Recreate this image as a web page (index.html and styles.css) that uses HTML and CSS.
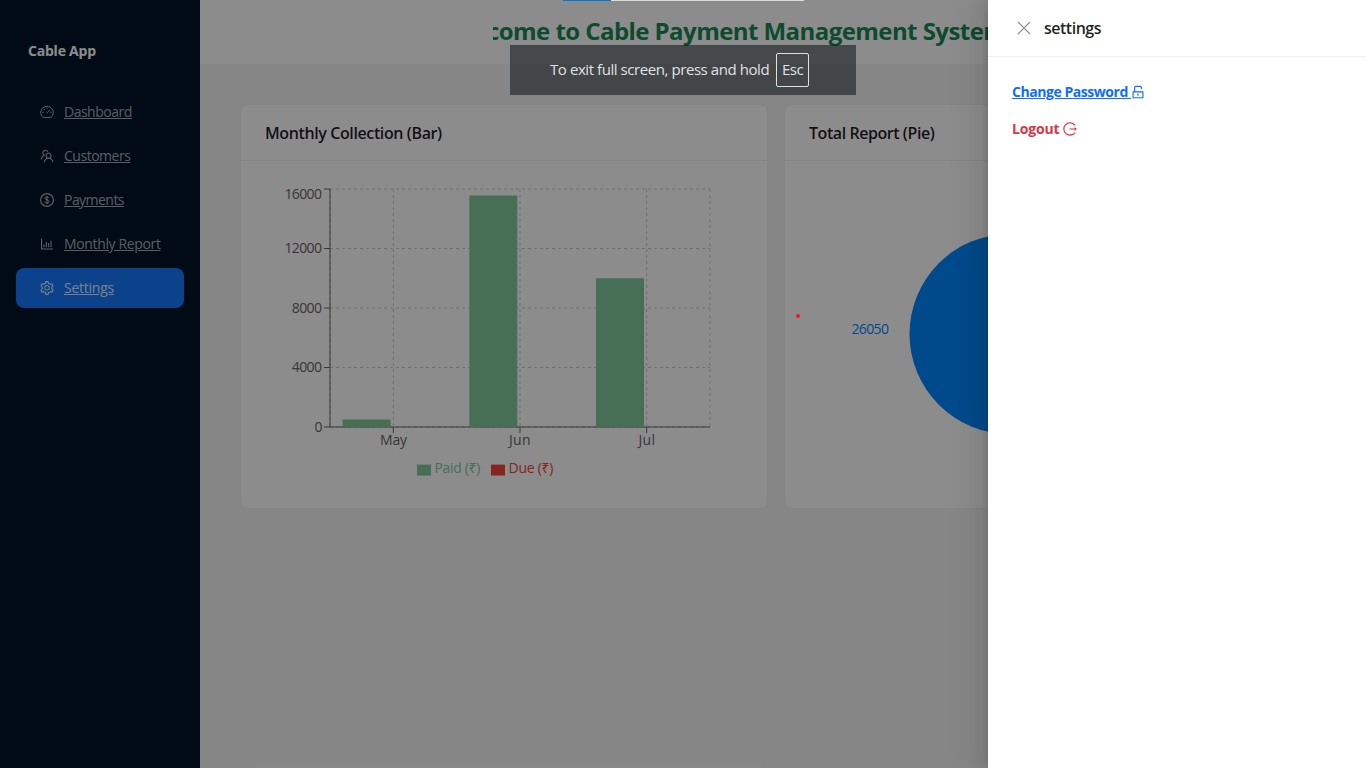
FILE: index.html
```html
<!DOCTYPE html>
<html lang="en">
<head>
<meta charset="utf-8">
<title>Cable App</title>
<link rel="stylesheet" href="styles.css">
</head>
<body>
<div class="layout">
  <aside class="sider">
    <div class="brand">Cable App</div>
    <nav class="menu">
      <a class="item"><svg class="icon" viewBox="0 0 14 14" fill="none" stroke="currentColor"><path d="M3 12.4A6.3 6.3 0 1 1 11 12.4Z"/><path d="M6.6 8.4 9.8 4.9M7 2.5v1.3M2.4 7.3h1.4M10.2 7.3h1.4M3.7 4l1 1"/></svg><span class="t-dash">Dashboard</span></a>
      <a class="item"><svg class="icon" viewBox="64 64 896 896" fill="currentColor"><path d="M824.2 699.9a301.55 301.55 0 00-86.4-60.4C783.1 602.8 812 546.8 812 484c0-110.8-92.4-201.7-203.2-200-109.1 1.7-197 90.6-197 200 0 62.8 29 118.8 74.2 155.5a300.95 300.95 0 00-86.4 60.4C345 754.6 314 826.8 312 903.8a8 8 0 008 8.2h56c4.3 0 7.9-3.4 8-7.7 1.9-58 25.4-112.3 66.7-153.5A226.62 226.62 0 01612 684c60.9 0 118.2 23.7 161.3 66.8C814.6 792 838 846.3 840 904.3c.1 4.3 3.7 7.7 8 7.7h56a8 8 0 008-8.2c-2-77-33-149.2-87.8-203.9zM612 612c-34.2 0-66.4-13.3-90.5-37.5a126.86 126.86 0 01-37.5-91.8c.3-32.8 13.4-64.5 36.3-88 24-24.6 56.1-38.3 90.4-38.7 33.9-.3 66.8 12.9 91 36.6 24.8 24.3 38.4 56.8 38.4 91.4 0 34.2-13.3 66.3-37.5 90.5A127.3 127.3 0 01612 612zM361.5 510.4c-.9-8.7-1.4-17.5-1.4-26.4 0-15.9 1.5-31.4 4.3-46.5.7-3.6-1.2-7.3-4.5-8.8-13.6-6.1-26.1-14.5-36.9-25.1a127.54 127.54 0 01-38.7-95.4c.9-32.1 13.8-62.6 36.3-85.6 24.7-25.3 57.9-39.1 93.2-38.7 31.9.3 62.7 12.6 86 34.4 7.9 7.4 14.7 15.6 20.4 24.4 2 3.1 5.9 4.4 9.3 3.2 17.6-6.1 36.2-10.4 55.3-12.4 5.6-.6 8.8-6.6 6.3-11.6-32.5-64.3-98.9-108.7-175.7-109.9-110.9-1.7-203.3 89.2-203.3 199.9 0 62.8 28.9 118.8 74.2 155.5-31.8 14.7-61.1 35-86.5 60.4-54.8 54.7-85.8 126.9-87.8 204a8 8 0 008 8.2h56.1c4.3 0 7.9-3.4 8-7.7 1.9-58 25.4-112.3 66.7-153.5 29.4-29.4 65.4-49.8 104.7-59.7 3.9-1 6.5-4.7 6-8.7z"/></svg><span class="t-cust">Customers</span></a>
      <a class="item"><svg class="icon" viewBox="0 0 14 14" fill="none" stroke="currentColor"><circle cx="7" cy="7" r="6.4" stroke-width="1.15"/><path d="M9 5.2C8.8 4.3 8 4 7 4 5.900 4 5.100 4.500 5.100 5.400 5.100 7.300 9 6.400 9 8.500 9 9.500 8.200 10 7 10 5.900 10 5 9.600 4.900 8.600M7 3v8"/></svg><span class="t-pay">Payments</span></a>
      <a class="item"><svg class="icon" viewBox="64 64 896 896" fill="currentColor"><path d="M888 792H200V168c0-4.400-3.600-8-8-8h-56c-4.400 0-8 3.600-8 8v688c0 4.400 3.600 8 8 8h752c4.400 0 8-3.600 8-8v-56c0-4.400-3.600-8-8-8zM288 712h56c4.400 0 8-3.600 8-8V560c0-4.400-3.600-8-8-8h-56c-4.400 0-8 3.600-8 8v144c0 4.400 3.600 8 8 8zm152 0h56c4.400 0 8-3.600 8-8V384c0-4.400-3.600-8-8-8h-56c-4.400 0-8 3.600-8 8v320c0 4.400 3.600 8 8 8zm152 0h56c4.400 0 8-3.600 8-8V462c0-4.400-3.600-8-8-8h-56c-4.400 0-8 3.600-8 8v242c0 4.400 3.600 8 8 8zm152 0h56c4.400 0 8-3.600 8-8V304c0-4.400-3.600-8-8-8h-56c-4.400 0-8 3.600-8 8v400c0 4.400 3.600 8 8 8z"/></svg><span class="t-rep">Monthly Report</span></a>
      <a class="item selected"><svg class="icon" viewBox="64 64 896 896" fill="currentColor"><path d="M924.8 625.7l-65.5-56c3.1-19 4.7-38.4 4.7-57.8s-1.6-38.8-4.7-57.8l65.5-56a32.03 32.03 0 009.3-35.2l-.9-2.6a443.74 443.74 0 00-79.7-137.9l-1.8-2.1a32.12 32.12 0 00-35.1-9.5l-81.3 28.9c-30-24.6-63.5-44-99.7-57.6l-15.7-85a32.05 32.05 0 00-25.8-25.7l-2.7-.5c-52.1-9.4-106.9-9.4-159 0l-2.7.5a32.05 32.05 0 00-25.8 25.7l-15.8 85.4a351.86 351.86 0 00-99 57.4l-81.9-29.1a32 32 0 00-35.1 9.5l-1.8 2.1a446.02 446.02 0 00-79.7 137.9l-.9 2.6c-4.5 12.5-.8 26.5 9.3 35.2l66.3 56.6c-3.1 18.8-4.6 38-4.6 57.1 0 19.2 1.5 38.4 4.600 57.1L99 625.5a32.03 32.03 0 00-9.3 35.2l.9 2.6c18.1 50.4 44.900 96.9 79.7 137.9l1.8 2.1a32.12 32.12 0 0035.1 9.500l81.9-29.1c29.8 24.5 63.1 43.900 99 57.4l15.8 85.4a32.05 32.05 0 0025.8 25.7l2.7.5a449.4 449.4 0 00159 0l2.700-.5a32.05 32.05 0 0025.8-25.7l15.7-85a350 350 0 0099.700-57.6l81.3 28.9a32 32 0 0035.1-9.5l1.8-2.1c34.8-41.1 61.6-87.5 79.7-137.9l.9-2.6c4.5-12.3.8-26.3-9.3-35zM788.3 465.9c2.5 15.1 3.8 30.6 3.8 46.1s-1.3 31-3.8 46.1l-6.6 40.1 74.7 63.9a370.03 370.03 0 01-42.6 73.6L721 702.8l-31.4 25.8c-23.9 19.6-50.5 35-79.3 45.8l-38.1 14.3-17.9 97a377.5 377.5 0 01-85 0l-17.9-97.2-37.8-14.5c-28.5-10.8-55-26.2-78.7-45.7l-31.4-25.9-93.4 33.2c-17-22.9-31.2-47.6-42.6-73.6l75.500-64.5-6.5-40c-2.4-14.9-3.7-30.3-3.7-45.5 0-15.3 1.2-30.6 3.7-45.5l6.5-40-75.5-64.5c11.3-26.1 25.6-50.7 42.6-73.6l93.4 33.2 31.4-25.9c23.7-19.5 50.2-34.9 78.7-45.7l37.9-14.3 17.9-97.2c28.1-3.2 56.8-3.2 85 0l17.9 97 38.1 14.3c28.7 10.8 55.4 26.2 79.3 45.8l31.4 25.8 92.8-32.9c17 22.9 31.2 47.6 42.6 73.6L781.8 426l6.5 39.9zM512 326c-97.2 0-176 78.8-176 176s78.8 176 176 176 176-78.8 176-176-78.8-176-176-176zm79.2 255.2A111.6 111.6 0 01512 614c-29.9 0-58-11.7-79.2-32.8A111.6 111.6 0 01400 502c0-29.900 11.7-58 32.8-79.2C454 401.6 482.1 390 512 390c29.9 0 58 11.6 79.2 32.8A111.6 111.6 0 01624 502c0 29.9-11.7 58-32.8 79.2z"/></svg><span class="t-set">Settings</span></a>
    </nav>
  </aside>
  <div class="page">
    <header class="header"><div class="marquee"><h1>Welcome to Cable Payment Management System</h1></div></header>
    <main class="content">
      <section class="card">
        <h2><span class="t-bar">Monthly Collection (Bar)</span></h2>
        <div class="body">
          <svg class="chart" viewBox="265 185 478 300">
            <g stroke="#ccc" fill="none" stroke-dasharray="3 3">
              <path d="M330 189H710M330 248.500H710M330 308H710M330 367.500H710M330 427H710M330 189V427M393.330 189V427M520 189V427M646.670 189V427M710 189V427"/>
            </g>
            <g stroke="#666" fill="none"><path d="M330 189V427H710M324 189h6M324 248.500h6M324 308h6M324 367.500h6M324 427h6M393.330 427v6M520 427v6M646.670 427v6"/></g>
            <g fill="#82ca9d"><path d="M342.670 419.500h48V427h-48zM469.330 195.500h48V427h-48zM596 278.200h48V427h-48z"/></g>
            <g fill="#666" class="ticks">
              <text x="284.500" y="199" textLength="37.500">16000</text><text x="284.500" y="253" textLength="37.500">12000</text><text x="291.700" y="313" textLength="30.300">8000</text><text x="291.700" y="372" textLength="30.300">4000</text><text x="314.500" y="432" textLength="7.500">0</text>
              <text x="380" y="445" textLength="27">May</text><text x="509" y="445" textLength="21.500">Jun</text><text x="638.500" y="445" textLength="16.500">Jul</text>
            </g>
            <g class="ticks"><path fill="#82ca9d" d="M417 464.600h14v10.900h-14z"/><text fill="#82ca9d" x="434.500" y="473" textLength="46">Paid (₹)</text><path fill="#f44336" d="M491 464.600h14v10.900h-14z"/><text fill="#f44336" x="508.500" y="473" textLength="45">Due (₹)</text></g>
          </svg>
        </div>
      </section>
      <section class="card">
        <h2><span class="t-pie">Total Report (Pie)</span></h2>
        <div class="body">
          <svg class="chart" viewBox="809 185 478 300"><circle cx="1009.500" cy="334" r="100" fill="#0088fe"/><text class="ticks" fill="#0088fe" x="851.500" y="334" textLength="37.500">26050</text></svg>
        </div>
      </section>
    </main>
  </div>
</div>
<div class="mask"></div>
<span class="dot"></span>
<aside class="drawer">
  <div class="drawer-head"><svg class="close" viewBox="0 0 16 16"><path d="M1.900 1.900 14.100 14.100M14.100 1.900 1.900 14.100"/></svg><span class="t-head">settings</span></div>
  <div class="drawer-body">
    <a class="password"><span class="t-pass">Change Password </span><svg class="icon" viewBox="64 64 896 896" fill="currentColor"><path d="M832 464H332V240c0-30.9 25.1-56 56-56h248c30.9 0 56 25.1 56 56v68c0 4.4 3.6 8 8 8h56c4.4 0 8-3.6 8-8v-68c0-70.7-57.3-128-128-128H388c-70.7 0-128 57.3-128 128v224h-68c-17.7 0-32 14.3-32 32v384c0 17.7 14.3 32 32 32h640c17.7 0 32-14.3 32-32V496c0-17.7-14.3-32-32-32zm-40 376H232V536h560v304zM484 701v53c0 4.4 3.6 8 8 8h40c4.4 0 8-3.6 8-8v-53a48.01 48.01 0 10-56 0z"/></svg></a>
    <a class="logout"><span class="t-out">Logout</span><svg class="icon" viewBox="64 64 896 896" fill="currentColor"><path d="M868 732h-70.3c-4.8 0-9.3 2.1-12.3 5.8-7 8.5-14.5 16.7-22.4 24.5a353.84 353.84 0 01-112.7 75.9A352.8 352.8 0 01512.4 866c-47.9 0-94.3-9.4-137.9-27.8a353.84 353.84 0 01-112.7-75.9 353.28 353.28 0 01-76-112.5C167.3 606.2 158 559.9 158 512s9.4-94.2 27.8-137.8c17.8-42.1 43.4-80 76-112.5s70.5-58.1 112.7-75.9c43.6-18.4 90-27.8 137.9-27.8 47.9 0 94.3 9.3 137.9 27.8 42.2 17.8 80.1 43.4 112.7 75.9 7.9 7.9 15.3 16.1 22.4 24.5 3 3.7 7.6 5.8 12.3 5.8H868c6.3 0 10.2-7 6.7-12.3C798 160.5 663.8 81.6 511.3 82 271.7 82.6 79.6 277.1 82 516.4 84.4 751.9 276.2 942 512.4 942c152.1 0 285.7-78.8 362.3-197.7 3.4-5.3-.4-12.3-6.7-12.3zm88.9-226.3L815 393.7c-5.3-4.2-13-.4-13 6.3v76H488c-4.4 0-8 3.6-8 8v56c0 4.4 3.6 8 8 8h314v76c0 6.7 7.8 10.500 13 6.300l141.900-112a8 8 0 000-12.600z"/></svg></a>
  </div>
</aside>
<div class="toast"><span class="t-toast">To exit full screen, press and hold</span><kbd>Esc</kbd></div>
<div class="progress"><i></i></div>
</body>
</html>
```
FILE: styles.css
```css
* { box-sizing: border-box; }
body { margin: 0; height: 768px; overflow: hidden; position: relative; font: 14px/22px "Open Sans", "Noto Sans", sans-serif; background: #f5f5f5; }
span { white-space: pre; }
.layout { display: flex; height: 768px; width: 1366px; }
.sider { width: 200px; background: #001529; flex: none; }
.brand { margin: 40px 28px 0; color: #fff; font-weight: 700; letter-spacing: -.22px; white-space: nowrap; }
.menu { display: flex; flex-direction: column; gap: 4px; padding: 30px 16px 0; }
.item { height: 40px; padding: 0 24px; display: flex; align-items: center; gap: 10px; border-radius: 8px; color: rgba(255,255,255,.65); text-decoration: underline; }
.item.selected { background: #1677ff; color: #fff; }
.selected .icon, .selected span { opacity: .85; }
.icon { width: 14px; height: 14px; flex: none; }
.page { flex: 1; min-width: 0; }
.header { height: 64px; background: #fff; padding: 0 0 0 293px; }
.marquee { overflow: hidden; height: 62px; display: flex; align-items: center; }
h1 { margin: 0 0 0 -49px; font-size: 24px; line-height: 32px; font-weight: 700; color: #198754; white-space: nowrap; letter-spacing: -.56px; }
.content { padding: 40px 0 0 40px; display: grid; grid-template-columns: 528px 528px; gap: 16px; }
.card { height: 405px; background: #fff; border: 1px solid #f0f0f0; border-radius: 8px; }
h2 { margin: 0; height: 56px; padding: 0 24px; border-bottom: 1px solid #f0f0f0; font-size: 16px; line-height: 57px; font-weight: 600; color: rgba(0,0,0,.88); }
.body { padding: 24px; }
.chart { display: block; width: 478px; height: 300px; }
.ticks { font-size: 14px; }
.t-dash { letter-spacing: -.5px; }
.t-cust { letter-spacing: -.48px; }
.t-pay { letter-spacing: -.54px; }
.t-rep { letter-spacing: -.36px; }
.t-set { letter-spacing: -.25px; }
.t-bar { letter-spacing: -.39px; }
.t-pie { letter-spacing: -.44px; }
.t-head { letter-spacing: -.5px; }
.t-pass { letter-spacing: -.45px; }
.t-out { letter-spacing: -.17px; }
.mask { position: absolute; inset: 0; background: rgba(0,0,0,.45); }
.dot { position: absolute; left: 796px; top: 314px; width: 4px; height: 4px; border-radius: 50%; background: #ed1c24; }
.drawer { position: absolute; right: 0; top: 0; width: 378px; height: 768px; background: #fff; box-shadow: -6px 0 16px rgba(0,0,0,.08), -3px 0 6px -4px rgba(0,0,0,.12), -9px 0 28px 8px rgba(0,0,0,.05); }
.drawer-head { height: 57px; border-bottom: 1px solid #f0f0f0; padding: 0 28px; display: flex; align-items: center; gap: 12px; font-size: 16px; font-weight: 600; color: rgba(0,0,0,.88); }
.close { width: 16px; height: 16px; fill: none; stroke: #8a8a8a; stroke-width: 1.3; }
.drawer-body { padding: 24px; display: flex; flex-direction: column; gap: 15px; font-weight: 700; }
.drawer-body a { display: flex; align-items: center; }
.password { color: #0d6efd; }
.password span { text-decoration: underline; }
.logout { color: #dc3545; gap: 4px; }
.toast { position: absolute; left: 510px; top: 45px; width: 346px; height: 50px; padding: 0 47px 0 40px; display: flex; align-items: center; justify-content: space-between; background: rgba(22,28,34,.6); color: #e0e0e0; font-size: 15px; }
.t-toast { letter-spacing: -.43px; padding-bottom: 2px; }
kbd { width: 33px; height: 34px; flex: none; border: 1px solid #e0e0e0; border-radius: 2px; font: inherit; line-height: 30px; text-align: center; letter-spacing: -.5px; }
.progress { position: absolute; left: 563px; top: 0; width: 241px; height: 1px; background: #ddd; }
.progress i { display: block; width: 48px; height: 1px; background: #0078d4; }
```
